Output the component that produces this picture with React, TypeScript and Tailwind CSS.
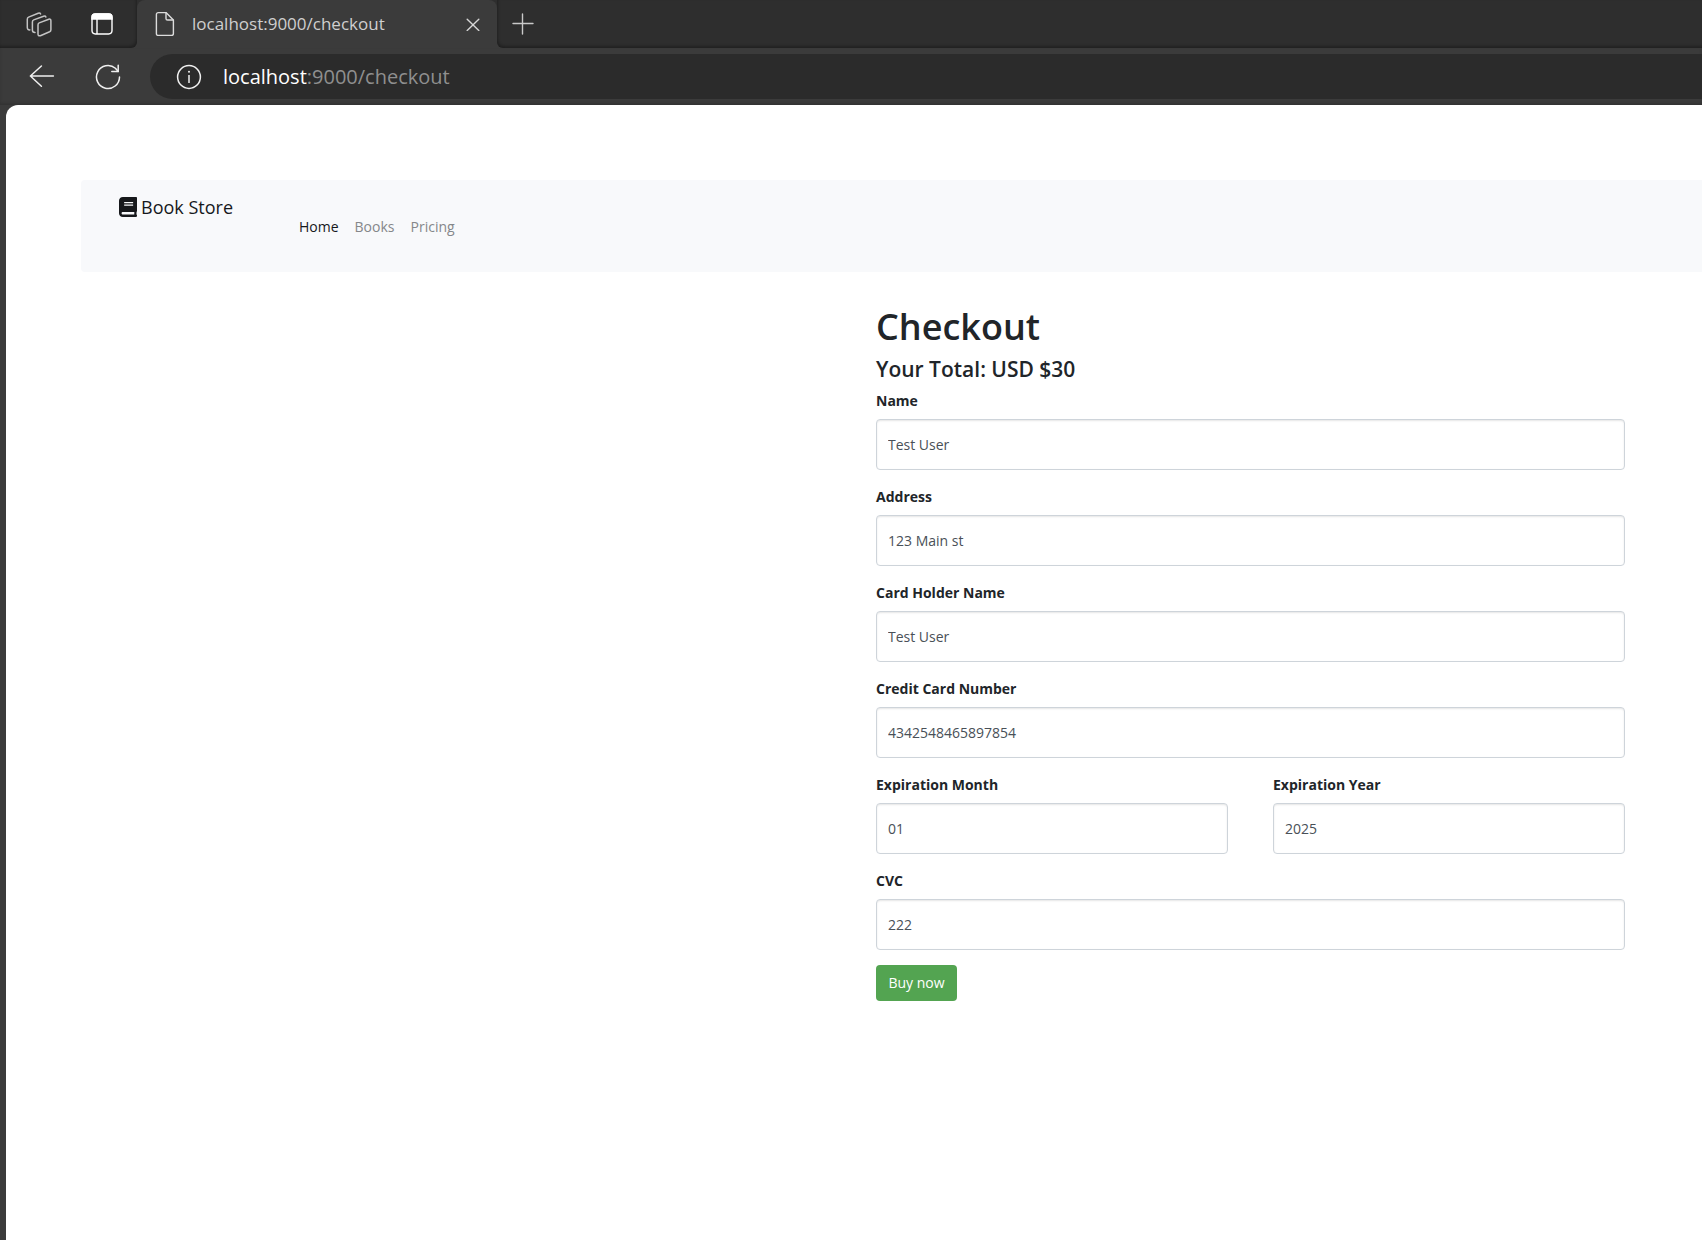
import React, { useId } from "react";

function WorkspacesIcon() {
  return (
    <svg width="26" height="26" viewBox="0 0 26 26" fill="none" stroke="#c4c4c4" strokeWidth="1.5" strokeLinejoin="round" strokeLinecap="round">
      <path d="M13.2 11.9 22.8 8.2Q24.9 7.6 24.9 9.7V18.7Q24.9 20.2 23.6 20.8L14.4 24.7Q12 25.4 12 23V14Q12 12.4 13.2 11.9Z" />
      <path d="M9 21.4Q6.4 21.4 6.4 19.2V11Q6.4 9.4 7.7 8.9L17.6 5.2Q19.4 4.6 19.9 6" />
      <path d="M3.9 18.9Q1.3 19 1.3 16.6V8.2Q1.3 6.6 2.6 6.1L12.2 2.2Q14 1.6 14.6 3" />
    </svg>
  );
}

function TabActionsIcon() {
  return (
    <svg width="22" height="22" viewBox="0 0 22 22" fill="none" stroke="#fff" strokeWidth="1.4">
      <rect x="1" y="1" width="20" height="20" rx="3.4" />
      <path d="M1 4.4Q1 1 4.4 1H17.6Q21 1 21 4.4V6H1Z" fill="#fff" />
      <path d="M6 6V21" />
    </svg>
  );
}

function PageIcon() {
  return (
    <svg width="20" height="26" viewBox="0 0 20 26" fill="none" stroke="#dcdcdc" strokeWidth="1.4" strokeLinejoin="round">
      <path d="M3.4 1.6H11L18.4 9V22.4Q18.4 24.4 16.4 24.4H3.4Q1.4 24.4 1.4 22.4V3.6Q1.4 1.6 3.4 1.6Z" />
      <path d="M11 1.6V7.4Q11 9 12.6 9H18.4" />
    </svg>
  );
}

function CloseIcon() {
  return (
    <svg width="14" height="14" viewBox="0 0 14 14" stroke="#d6d6d6" strokeWidth="1.4" strokeLinecap="round">
      <path d="M1.2 2.2 12.8 13.4M12.8 2.2 1.2 13.4" />
    </svg>
  );
}

function PlusIcon() {
  return (
    <svg width="22" height="22" viewBox="0 0 22 22" stroke="#c9c9c9" strokeWidth="1.4" strokeLinecap="round">
      <path d="M10.5 1V21M1 10.5H21" />
    </svg>
  );
}

function BackIcon() {
  return (
    <svg width="26" height="24" viewBox="0 0 26 24" fill="none" stroke="#f0f0f0" strokeWidth="1.5" strokeLinecap="round" strokeLinejoin="round">
      <path d="M24.4 11H1.4M12.4 1 1.4 11 12.4 21.2" />
    </svg>
  );
}

function ReloadIcon() {
  return (
    <svg width="26" height="26" viewBox="0 0 26 26" fill="none" stroke="#f0f0f0" strokeWidth="1.5" strokeLinecap="round" strokeLinejoin="round">
      <path d="M24.5 13A11.5 11.5 0 1 1 20.4 4.2L23.2 7.4" />
      <path d="M23.2 1.2V7.6H16.8" />
    </svg>
  );
}

function InfoIcon() {
  return (
    <svg width="26" height="26" viewBox="0 0 26 26" fill="none" stroke="#f0f0f0" strokeWidth="1.5">
      <circle cx="13" cy="13" r="11.4" />
      <path d="M13 11V19" />
      <circle cx="13" cy="7.8" r="1" fill="#f0f0f0" stroke="none" />
    </svg>
  );
}

function BookIcon() {
  return (
    <svg width="18" height="20" viewBox="0 0 448 512" fill="#16181b" preserveAspectRatio="none">
      <path d="M448 360V24c0-13.3-10.7-24-24-24H96C43 0 0 43 0 96v320c0 53 43 96 96 96h328c13.3 0 24-10.7 24-24v-16c0-7.5-3.5-14.3-8.9-18.7-4.2-15.4-4.2-59.3 0-74.7 5.4-4.3 8.9-11.1 8.9-18.6zM128 134c0-3.3 2.7-6 6-6h212c3.3 0 6 2.7 6 6v20c0 3.3-2.7 6-6 6H134c-3.3 0-6-2.7-6-6v-20zm0 64c0-3.3 2.7-6 6-6h212c3.3 0 6 2.7 6 6v20c0 3.3-2.7 6-6 6H134c-3.3 0-6-2.7-6-6v-20zm253.4 250H96c-17.7 0-32-14.3-32-32 0-17.6 14.4-32 32-32h285.4c-1.9 17.1-1.9 46.9 0 64z" />
    </svg>
  );
}

function Field({ label, value }: { label: string; value: string }) {
  const id = useId();
  return (
    <div className="flex min-w-0 flex-1 flex-col">
      <label htmlFor={id} className="mb-1.5 text-sm leading-6 font-bold">
        {label}
      </label>
      <input
        id={id}
        defaultValue={value}
        className="h-[51px] w-full rounded border border-[#ced4da] bg-white px-[11px] text-sm text-[#495057] shadow-[inset_0_1px_2px_rgba(0,0,0,0.1)] outline-none"
      />
    </div>
  );
}

function BrowserChrome() {
  return (
    <header className="bg-[#3b3b3b]">
      <div className="flex h-12 bg-[#3b3b3b]">
        <div className="flex w-[137px] shrink-0 items-center rounded-br-md bg-[#2e2e2e] pl-[26px] shadow-[inset_-1px_-2px_3px_rgba(0,0,0,0.3)]">
          <button aria-label="Workspaces">
            <WorkspacesIcon />
          </button>
          <button aria-label="Tab actions" className="ml-[39px]">
            <TabActionsIcon />
          </button>
        </div>
        <div className="w-[360px] shrink-0 bg-[#2e2e2e]">
          <div className="flex h-full items-center rounded-t-lg bg-[#3b3b3b] pr-[17px] pl-[18px]">
            <PageIcon />
            <span className="ml-[17px] flex-1 text-[17px] leading-6 text-[#cfcfcf]">localhost:9000/checkout</span>
            <button aria-label="Close tab">
              <CloseIcon />
            </button>
          </div>
        </div>
        <div className="flex flex-1 items-center rounded-bl-md bg-[#2e2e2e] pl-[15px] shadow-[inset_1px_-2px_3px_rgba(0,0,0,0.3)]">
          <button aria-label="New tab">
            <PlusIcon />
          </button>
        </div>
      </div>
      <div className="flex items-center py-1.5 pl-[29px] shadow-[inset_0_-2px_3px_rgba(0,0,0,0.15)]">
        <button aria-label="Back">
          <BackIcon />
        </button>
        <button aria-label="Refresh" className="ml-10">
          <ReloadIcon />
        </button>
        <div className="ml-[29px] flex h-[45px] flex-1 items-center rounded-l-full bg-[#2b2b2b] pl-[26px]">
          <InfoIcon />
          <span className="ml-[21px] text-xl leading-7 text-[#8f8f8f]">
            <span className="text-white">localhost</span>:9000/checkout
          </span>
        </div>
      </div>
    </header>
  );
}

export default function App() {
  return (
    <div className="flex min-h-screen flex-col overflow-hidden bg-[#3b3b3b] font-['Open_Sans','Noto_Sans',sans-serif] text-[#212529]">
      <BrowserChrome />
      <main className="ml-1.5 flex-1 rounded-tl-xl bg-white pt-[75px]">
        <nav className="ml-[75px] flex h-[92px] items-start rounded-l bg-[#f8f9fb] pt-3 pl-[38px]">
          <a href="#" className="flex items-center gap-1 text-lg leading-[30px] text-[#16181b]">
            <BookIcon />
            Book Store
          </a>
          <div className="mt-[23px] ml-[66px] flex gap-4 text-sm leading-6 text-[#85878a]">
            <a href="#" className="text-[#16181b]">Home</a>
            <a href="#">Books</a>
            <a href="#">Pricing</a>
          </div>
        </nav>
        <div className="grid grid-cols-2 pt-[31px]">
          <form className="col-start-2 flex flex-col gap-[15px] pr-[77px] pl-[22px]" onSubmit={(e) => e.preventDefault()}>
            <div className="-mb-[15px]">
              <h1 className="mb-1 text-[36px] leading-[48px] font-semibold">Checkout</h1>
              <h4 className="mb-1.5 text-[21px] leading-7 font-semibold">Your Total: USD $30</h4>
            </div>
            <Field label="Name" value="Test User" />
            <Field label="Address" value="123 Main st" />
            <Field label="Card Holder Name" value="Test User" />
            <Field label="Credit Card Number" value="4342548465897854" />
            <div className="flex gap-[45px]">
              <Field label="Expiration Month" value="01" />
              <Field label="Expiration Year" value="2025" />
            </div>
            <Field label="CVC" value="222" />
            <button className="h-9 w-[81px] rounded bg-[#53a451] text-sm text-white">Buy now</button>
          </form>
        </div>
      </main>
    </div>
  );
}
